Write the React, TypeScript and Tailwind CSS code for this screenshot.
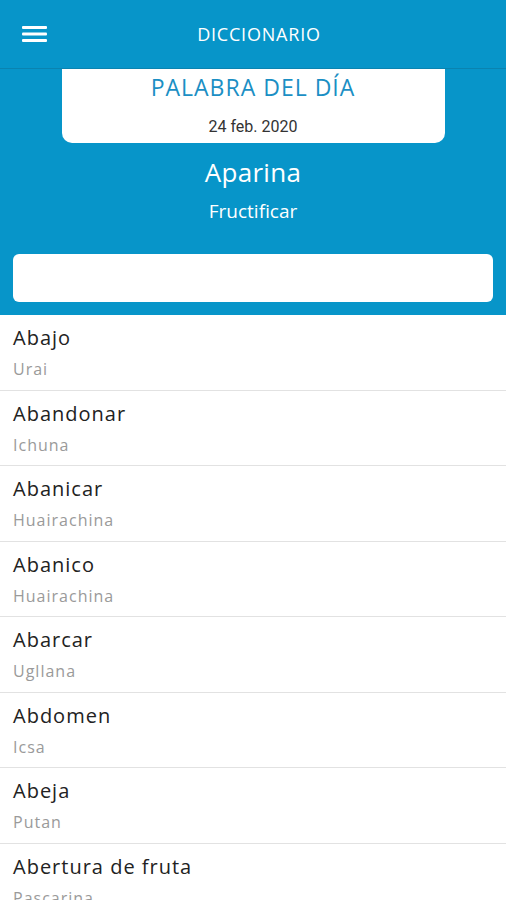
import { FC } from "react";

const words = [
  { es: "Abajo", qu: "Urai" },
  { es: "Abandonar", qu: "Ichuna" },
  { es: "Abanicar", qu: "Huairachina" },
  { es: "Abanico", qu: "Huairachina" },
  { es: "Abarcar", qu: "Ugllana" },
  { es: "Abdomen", qu: "Icsa" },
  { es: "Abeja", qu: "Putan" },
  { es: "Abertura de fruta", qu: "Pascarina" },
];

const MenuIcon: FC = () => (
  <svg width="26" height="18" viewBox="0 0 26 18" fill="#fff">
    <rect x="0" y="1" width="25" height="3" rx="1" />
    <rect x="0" y="7.5" width="25" height="3" rx="1" />
    <rect x="0" y="14" width="25" height="3" rx="1" />
  </svg>
);

const App: FC = () => {
  return (
    <div className="w-[506px] h-[900px] overflow-hidden bg-white font-['Open_Sans','Lato',sans-serif]">
      <div className="bg-[#0795c9]">
        <header className="h-[69px] flex items-center relative border-b border-[#0a83b0]">
          <button className="absolute left-[22px] top-[25px]">
            <MenuIcon />
          </button>
          <h1 className="flex-1 text-center text-white text-[18px] font-medium pl-[12px] tracking-[0.8px]">
            DICCIONARIO
          </h1>
        </header>

        <div className="mx-auto w-[383px] h-[74px] bg-white rounded-b-[10px] flex flex-col items-center">
          <p className="text-[#1b8fc4] text-[23px] leading-[26px] mt-[5px] tracking-[1px]">
            PALABRA DEL DÍA
          </p>
          <p className="text-[#333] text-[16px] leading-[20px] mt-[17px] font-['Roboto',sans-serif]">
            24 feb. 2020
          </p>
        </div>

        <div className="flex flex-col items-center text-white">
          <p className="text-[26px] leading-[32px] mt-[13px] tracking-[0.3px]">Aparina</p>
          <p className="text-[19px] leading-[24px] mt-[11px] font-medium">Fructificar</p>
        </div>

        <div className="px-[13px] pt-[31px] pb-[13px]">
          <input className="w-full h-[48px] bg-white rounded-[6px] outline-none px-3" />
        </div>
      </div>

      <ul>
        {words.map((w) => (
          <li key={w.es} className="h-[75.5px] border-b border-[#e2e2e2] px-[13px] pt-[9px]">
            <p className="text-[#222] text-[20px] leading-[28px] tracking-[1px]">{w.es}</p>
            <p className="text-[#9a9a9a] text-[16px] leading-[22px] mt-[6px] tracking-[1px]">{w.qu}</p>
          </li>
        ))}
      </ul>
    </div>
  );
};

export default App;
